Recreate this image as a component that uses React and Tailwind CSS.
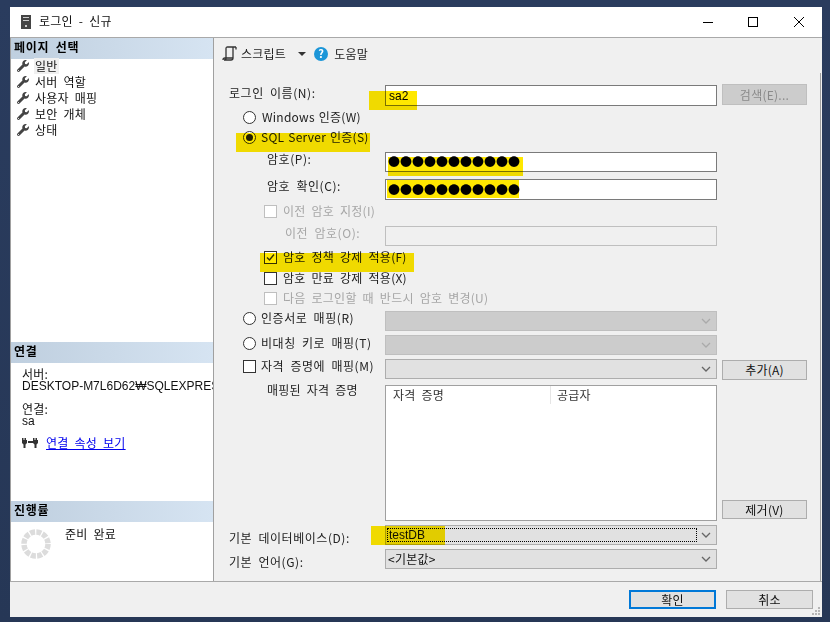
import { FaWrench } from "react-icons/fa";

const FONT = { fontFamily: '"Noto Sans CJK KR", "Liberation Sans", sans-serif' };
const LATIN = { fontFamily: '"Liberation Sans", sans-serif' };

// yellow marker strokes drawn over the form
function Marker({ className }) {
  return <div className={`absolute bg-[#ffe800] mix-blend-multiply ${className}`} />;
}

function Radio({ checked }) {
  return (
    <span className="flex h-[13px] w-[13px] shrink-0 items-center justify-center rounded-full border border-[#333] bg-white">
      {checked && <span className="h-[7px] w-[7px] rounded-full bg-[#222]" />}
    </span>
  );
}

function Check({ checked, disabled }) {
  return (
    <span className={`flex h-[13px] w-[13px] shrink-0 items-center justify-center border bg-white ${disabled ? "border-[#bfbfbf]" : "border-[#333]"}`}>
      {checked && (
        <svg width="11" height="11" viewBox="0 0 11 11" fill="none" stroke="#333" strokeWidth="1.4">
          <path d="M2 5.5 L4.5 8 L9 2.5" />
        </svg>
      )}
    </span>
  );
}

function Chevron({ color = "#666" }) {
  return (
    <svg width="10" height="6" viewBox="0 0 10 6" fill="none" stroke={color} strokeWidth="1.3">
      <path d="M1 1 L5 5 L9 1" />
    </svg>
  );
}

function Combo({ disabled, focused, children }) {
  return (
    <div className={`flex h-full w-full items-center border ${disabled ? "border-[#bfbfbf] bg-[#cccccc]" : "border-[#adadad] bg-[#e1e1e1]"}`}>
      <div className={`ml-[1px] flex h-[14px] w-[310px] items-center pb-[1px] pl-[1px] text-[12px] text-[#111] ${focused ? "border border-dotted border-black" : ""}`}>
        {children}
      </div>
      <div className="ml-auto mr-[3px] flex w-[14px] justify-center">
        <Chevron color={disabled ? "#aaaaaa" : "#666666"} />
      </div>
    </div>
  );
}

function Btn({ children, disabled, className = "" }) {
  return (
    <div className={`flex items-center justify-center border text-[12px] ${disabled ? "border-[#bfbfbf] bg-[#cccccc] text-[#8a8a8a]" : "border-[#adadad] bg-[#e1e1e1] text-[#111]"} ${className}`}>
      {children}
    </div>
  );
}

function Row({ className = "", label, labelClass = "", children, right }) {
  return (
    <div className={`relative flex ${className}`}>
      <div className={`flex w-[171px] shrink-0 items-center text-[12px] tracking-[0.55px] text-[#222] ${labelClass}`}>{label}</div>
      <div className="w-[332px] shrink-0">{children}</div>
      {right && <div className="ml-[5px] w-[85px]">{right}</div>}
    </div>
  );
}

function Option({ className = "", children }) {
  return <div className={`relative flex items-center text-[12px] text-[#222] ${className}`}>{children}</div>;
}

function SectionHead({ children, className = "" }) {
  return (
    <div className={`flex h-[21px] items-center bg-gradient-to-r from-[#bfcfdf] to-[#d6e4f2] pb-[4px] pl-[3px] text-[12px] font-bold tracking-[0.7px] text-black ${className}`}>
      {children}
    </div>
  );
}

function ScriptIcon() {
  return (
    <svg width="15" height="15" viewBox="0 0 15 15" fill="none" stroke="#333" strokeWidth="1.3">
      <path d="M4 12 V2.5 Q4 1 5.5 1 H14 M14 1 V3.5 M4 12 Q4 14 2 14 H9 Q11 14 11 12 V1.5" />
      <path d="M1 14 Q1 12 3 12 H11" />
    </svg>
  );
}

function PlugIcon() {
  return (
    <svg width="18" height="12" viewBox="0 0 18 12" fill="#333">
      <path d="M1 1 h1.500 v2 h1 v-2 h1.500 v2 h1 v3 l-1.500 1.500 v3.500 h-2 v-3.500 l-1.500 -1.500 z" transform="translate(-1 0)" />
      <path d="M10 1 h1.500 v2 h1 v-2 h1.500 v2 h1 v3 l-1.500 1.500 v3.500 h-2 v-3.500 l-1.500 -1.500 z" transform="translate(1 0)" />
      <rect x="6" y="4" width="5" height="2" />
    </svg>
  );
}

function Spinner() {
  return (
    <svg width="30" height="30" viewBox="0 0 30 30" fill="none">
      <circle cx="15" cy="15" r="12" stroke="#dcdcdc" strokeWidth="5.500" strokeDasharray="5 1.283" />
    </svg>
  );
}

const pages = ["일반", "서버 역할", "사용자 매핑", "보안 개체", "상태"];

export default function App() {
  return (
    <div className="h-[622px] w-[830px] overflow-hidden bg-gradient-to-b from-[#2a3c5e] to-[#263756] pl-[10px] pt-[7px] tracking-[0.25px] [word-spacing:3px]" style={FONT}>
      <div className="flex h-[610px] w-[812px] flex-col bg-[#f0f0f0]">
        {/* title bar */}
        <div className="flex h-[30px] shrink-0 items-center bg-white">
          <svg className="ml-[11px]" width="10" height="14" viewBox="0 0 10 14">
            <rect width="10" height="14" fill="#444" />
            <rect x="2" y="2" width="6" height="1" fill="#ccc" />
            <rect x="2" y="5" width="6" height="1" fill="#ccc" />
            <rect x="4" y="10" width="2" height="2" fill="#ccc" />
          </svg>
          <span className="mb-[3px] ml-[8px] text-[12px] text-[#111]">로그인 - 신규</span>
          <div className="ml-auto flex items-center">
            <span className="h-[1px] w-[10px] bg-black" />
            <span className="ml-[35px] h-[10px] w-[10px] border border-black" />
            <svg className="ml-[36px] mr-[18px]" width="10" height="10" viewBox="0 0 10 10" stroke="#000" strokeWidth="1">
              <path d="M0 0 L10 10 M10 0 L0 10" />
            </svg>
          </div>
        </div>

        <div className="flex h-[545px] shrink-0 border-y border-[#a9a9a9]">
          {/* left panel */}
          <div className="flex w-[204px] shrink-0 flex-col border-x border-[#a0a0a0] bg-white text-[12px] text-[#111]">
            <SectionHead>페이지 선택</SectionHead>
            <div className="-mt-[1px] flex h-[284px] flex-col pl-[6px]">
              {pages.map((p, i) => (
                <div key={p} className="flex h-[16px] items-center">
                  <FaWrench className="text-[#444]" size={12} />
                  <span className={`ml-[5px] px-[1px] leading-[16px] ${i === 0 ? "bg-[#f0f0f0]" : ""}`}>{p}</span>
                </div>
              ))}
            </div>
            <SectionHead>연결</SectionHead>
            <div className="flex h-[138px] flex-col overflow-hidden pl-[11px] pt-[4px] leading-[13px]">
              <div>서버:</div>
              <div className="whitespace-nowrap tracking-normal" style={LATIN}>DESKTOP-M7L6D62₩SQLEXPRESS</div>
              <div className="mt-[9px]">연결:</div>
              <div className="tracking-normal" style={LATIN}>sa</div>
              <div className="mt-[8px] flex items-center">
                <PlugIcon />
                <span className="ml-[6px] text-[#0000ee] underline">연결 속성 보기</span>
              </div>
            </div>
            <SectionHead>진행률</SectionHead>
            <div className="flex flex-1 pl-[10px] pt-[7px]">
              <Spinner />
              <span className="-mt-[2px] ml-[14px] leading-[14px]">준비 완료</span>
            </div>
          </div>

          {/* right panel */}
          <div className="flex flex-1 flex-col">
            <div className="flex h-[35px] shrink-0 items-center pb-[4px] pl-[8px] text-[12px] text-[#222]">
              <ScriptIcon />
              <span className="ml-[4px]">스크립트</span>
              <span className="ml-[12px] h-0 w-0 border-x-[4px] border-t-[4px] border-x-transparent border-t-[#333]" />
              <span className="ml-[8px] flex h-[14px] w-[14px] items-center justify-center rounded-full bg-[#1c96d8] text-[11px] font-bold leading-none text-white">?</span>
              <span className="ml-[6px]">도움말</span>
            </div>

            <div className="mr-[1px] flex flex-1 flex-col border-r border-[#a0a0a0] pt-[11px]">
              <Row className="h-[22px]" label="로그인 이름(N):" labelClass="pb-[4px] pl-[15px]"
                right={<Btn disabled className="h-[21px]">검색(E)...</Btn>}>
                <div className="mt-[1px] flex h-[21px] items-center border border-[#7a7a7a] bg-white pl-[3px] text-[12px] tracking-normal" style={LATIN}>sa2</div>
                <Marker className="left-[155px] top-[7px] h-[19px] w-[48px]" />
              </Row>
              <Option className="h-[22px] pl-[29px] [word-spacing:1px]"><Radio /><span className="ml-[6px]">Windows 인증(W)</span></Option>
              <Option className="h-[18px] pl-[29px] [word-spacing:1px]">
                <Radio checked /><span className="ml-[5px]">SQL Server 인증(S)</span>
                <Marker className="left-[22px] top-[5px] h-[19px] w-[134px]" />
              </Option>
              <Row className="mt-[6px] h-[20px]" label="암호(P):" labelClass="pb-[6px] pl-[53px]">
                <div className="flex h-full items-center border border-[#7a7a7a] bg-white pl-[2px] text-[12px] leading-none tracking-normal text-black">●●●●●●●●●●●</div>
                <Marker className="left-[174px] top-[5px] h-[19px] w-[135px]" />
              </Row>
              <Row className="mt-[7px] h-[21px]" label="암호 확인(C):" labelClass="pb-[8px] pl-[53px]">
                <div className="flex h-full items-center border border-[#7a7a7a] bg-white pl-[2px] text-[12px] leading-none tracking-normal text-black">●●●●●●●●●●●</div>
                <Marker className="left-[173px] top-[1px] h-[18px] w-[132px]" />
              </Row>
              <Option className="mt-[2px] h-[18px] pl-[50px]"><Check disabled /><span className="ml-[6px] text-[#a6a6a6]">이전 암호 지정(I)</span></Option>
              <Row className="mt-[6px] h-[20px]" label={<span className="text-[#a6a6a6]">이전 암호(O):</span>} labelClass="pb-[6px] pl-[71px]">
                <div className="h-full border border-[#bfbfbf] bg-[#f0f0f0]" />
              </Row>
              <Option className="mt-[2px] h-[18px] pl-[50px]">
                <Check checked /><span className="ml-[6px]">암호 정책 강제 적용(F)</span>
                <Marker className="left-[46px] top-[5px] h-[19px] w-[154px]" />
              </Option>
              <Option className="mt-[3px] h-[18px] pl-[50px]"><Check /><span className="ml-[6px]">암호 만료 강제 적용(X)</span></Option>
              <Option className="mt-[2px] h-[18px] pl-[50px]"><Check disabled /><span className="ml-[6px] text-[#a6a6a6]">다음 로그인할 때 반드시 암호 변경(U)</span></Option>
              <Row className="mt-[4px] h-[20px]" label={<><Radio /><span className="ml-[5px]">인증서로 매핑(R)</span></>} labelClass="pb-[6px] pl-[29px]">
                <Combo disabled />
              </Row>
              <Row className="mt-[4px] h-[20px]" label={<><Radio /><span className="ml-[5px]">비대칭 키로 매핑(T)</span></>} labelClass="pb-[4px] pl-[29px]">
                <Combo disabled />
              </Row>
              <Row className="mt-[4px] h-[20px]" label={<><Check /><span className="ml-[5px]">자격 증명에 매핑(M)</span></>} labelClass="pb-[6px] pl-[29px]"
                right={<Btn className="mt-[1px] h-[20px]">추가(A)</Btn>}>
                <Combo />
              </Row>
              <Row className="mt-[6px] h-[136px]" label={<span className="-mt-[1px] tracking-[0.25px]">매핑된 자격 증명</span>} labelClass="items-start pl-[53px] leading-[12px]"
                right={<div className="flex h-full flex-col justify-end pb-[2px]"><Btn className="h-[19px]">제거(V)</Btn></div>}>
                <div className="h-full border border-[#a0a0a0] bg-white text-[12px] tracking-[0.25px] text-[#333]">
                  <div className="flex h-[18px]">
                    <div className="flex w-[165px] items-center border-r border-[#e5e5e5] pl-[7px]">자격 증명</div>
                    <div className="flex items-center pl-[6px]">공급자</div>
                  </div>
                </div>
              </Row>
              <Row className="mt-[4px] h-[20px]" label="기본 데이터베이스(D):" labelClass="pl-[15px] pt-[6px]">
                <Combo focused><span className="tracking-normal" style={LATIN}>testDB</span></Combo>
                <Marker className="left-[157px] top-[1px] h-[19px] w-[74px]" />
              </Row>
              <Row className="mt-[4px] h-[20px]" label="기본 언어(G):" labelClass="pl-[15px] pt-[6px]">
                <Combo>&lt;기본값&gt;</Combo>
              </Row>
            </div>
          </div>
        </div>

        {/* footer */}
        <div className="relative flex flex-1 justify-end pr-[9px] pt-[8px] text-[12px] text-[#111]">
          <div className="flex h-[19px] w-[87px] items-center justify-center border-2 border-[#0078d7] bg-[#e1e1e1]">확인</div>
          <div className="ml-[10px] flex h-[19px] w-[87px] items-center justify-center border border-[#adadad] bg-[#e1e1e1]">취소</div>
          <svg className="absolute bottom-[1px] right-[1px]" width="9" height="9" viewBox="0 0 9 9" fill="#b5b5b5">
            <rect x="6" y="0" width="2" height="2" />
            <rect x="3" y="3" width="2" height="2" />
            <rect x="6" y="3" width="2" height="2" />
            <rect x="0" y="6" width="2" height="2" />
            <rect x="3" y="6" width="2" height="2" />
            <rect x="6" y="6" width="2" height="2" />
          </svg>
        </div>
      </div>
    </div>
  );
}
